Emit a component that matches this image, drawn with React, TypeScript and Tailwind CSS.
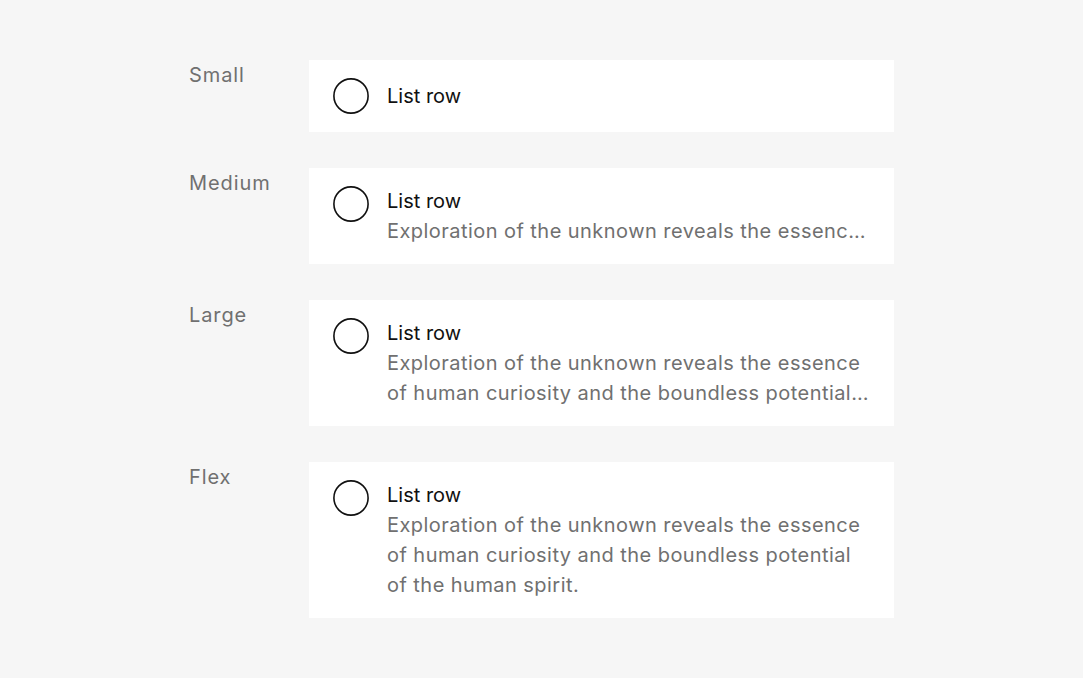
import type { ReactNode } from "react";

type Row = {
  label: string;
  description?: string;
  clamp?: "one" | "two";
};

const text =
  "Exploration of the unknown reveals the essence of human curiosity and the boundless potential of the human spirit.";

const rows: Row[] = [
  { label: "Small" },
  { label: "Medium", description: text, clamp: "one" },
  { label: "Large", description: text, clamp: "two" },
  { label: "Flex", description: text },
];

function Radio() {
  return (
    <svg width="36" height="36" viewBox="0 0 36 36" className="shrink-0">
      <circle cx="18" cy="18" r="17.1" fill="none" stroke="#111111" strokeWidth="1.6" />
    </svg>
  );
}

function ListRow({ row }: { row: Row }) {
  const clampClass =
    row.clamp === "one" ? "line-clamp-1" : row.clamp === "two" ? "line-clamp-2" : "";

  return (
    <div
      className={`flex gap-[18px] bg-white px-6 py-[18px] ${
        row.description ? "items-start" : "items-center"
      }`}
    >
      <Radio />
      <div className="min-w-0 flex-1">
        <div className="text-[20px] leading-[30px] text-[#111111]">List row</div>
        {row.description && (
          <p
            className={`text-[20px] leading-[30px] tracking-[0.45px] text-[#707070] ${clampClass}`}
          >
            {row.description}
          </p>
        )}
      </div>
    </div>
  );
}

function Section({ label, children }: { label: string; children: ReactNode }) {
  return (
    <div className="flex">
      <div className="w-[120px] shrink-0 text-[20px] leading-[30px] tracking-[0.9px] text-[#707070]">
        {label}
      </div>
      <div className="w-[585px]">{children}</div>
    </div>
  );
}

export default function App() {
  return (
    <div
      className="flex min-h-[678px] justify-center bg-[#f6f6f6] py-[60px]"
      style={{ fontFamily: "Inter, 'Noto Sans', sans-serif" }}
    >
      <div className="flex flex-col gap-9">
        {rows.map((row) => (
          <Section key={row.label} label={row.label}>
            <ListRow row={row} />
          </Section>
        ))}
      </div>
    </div>
  );
}
